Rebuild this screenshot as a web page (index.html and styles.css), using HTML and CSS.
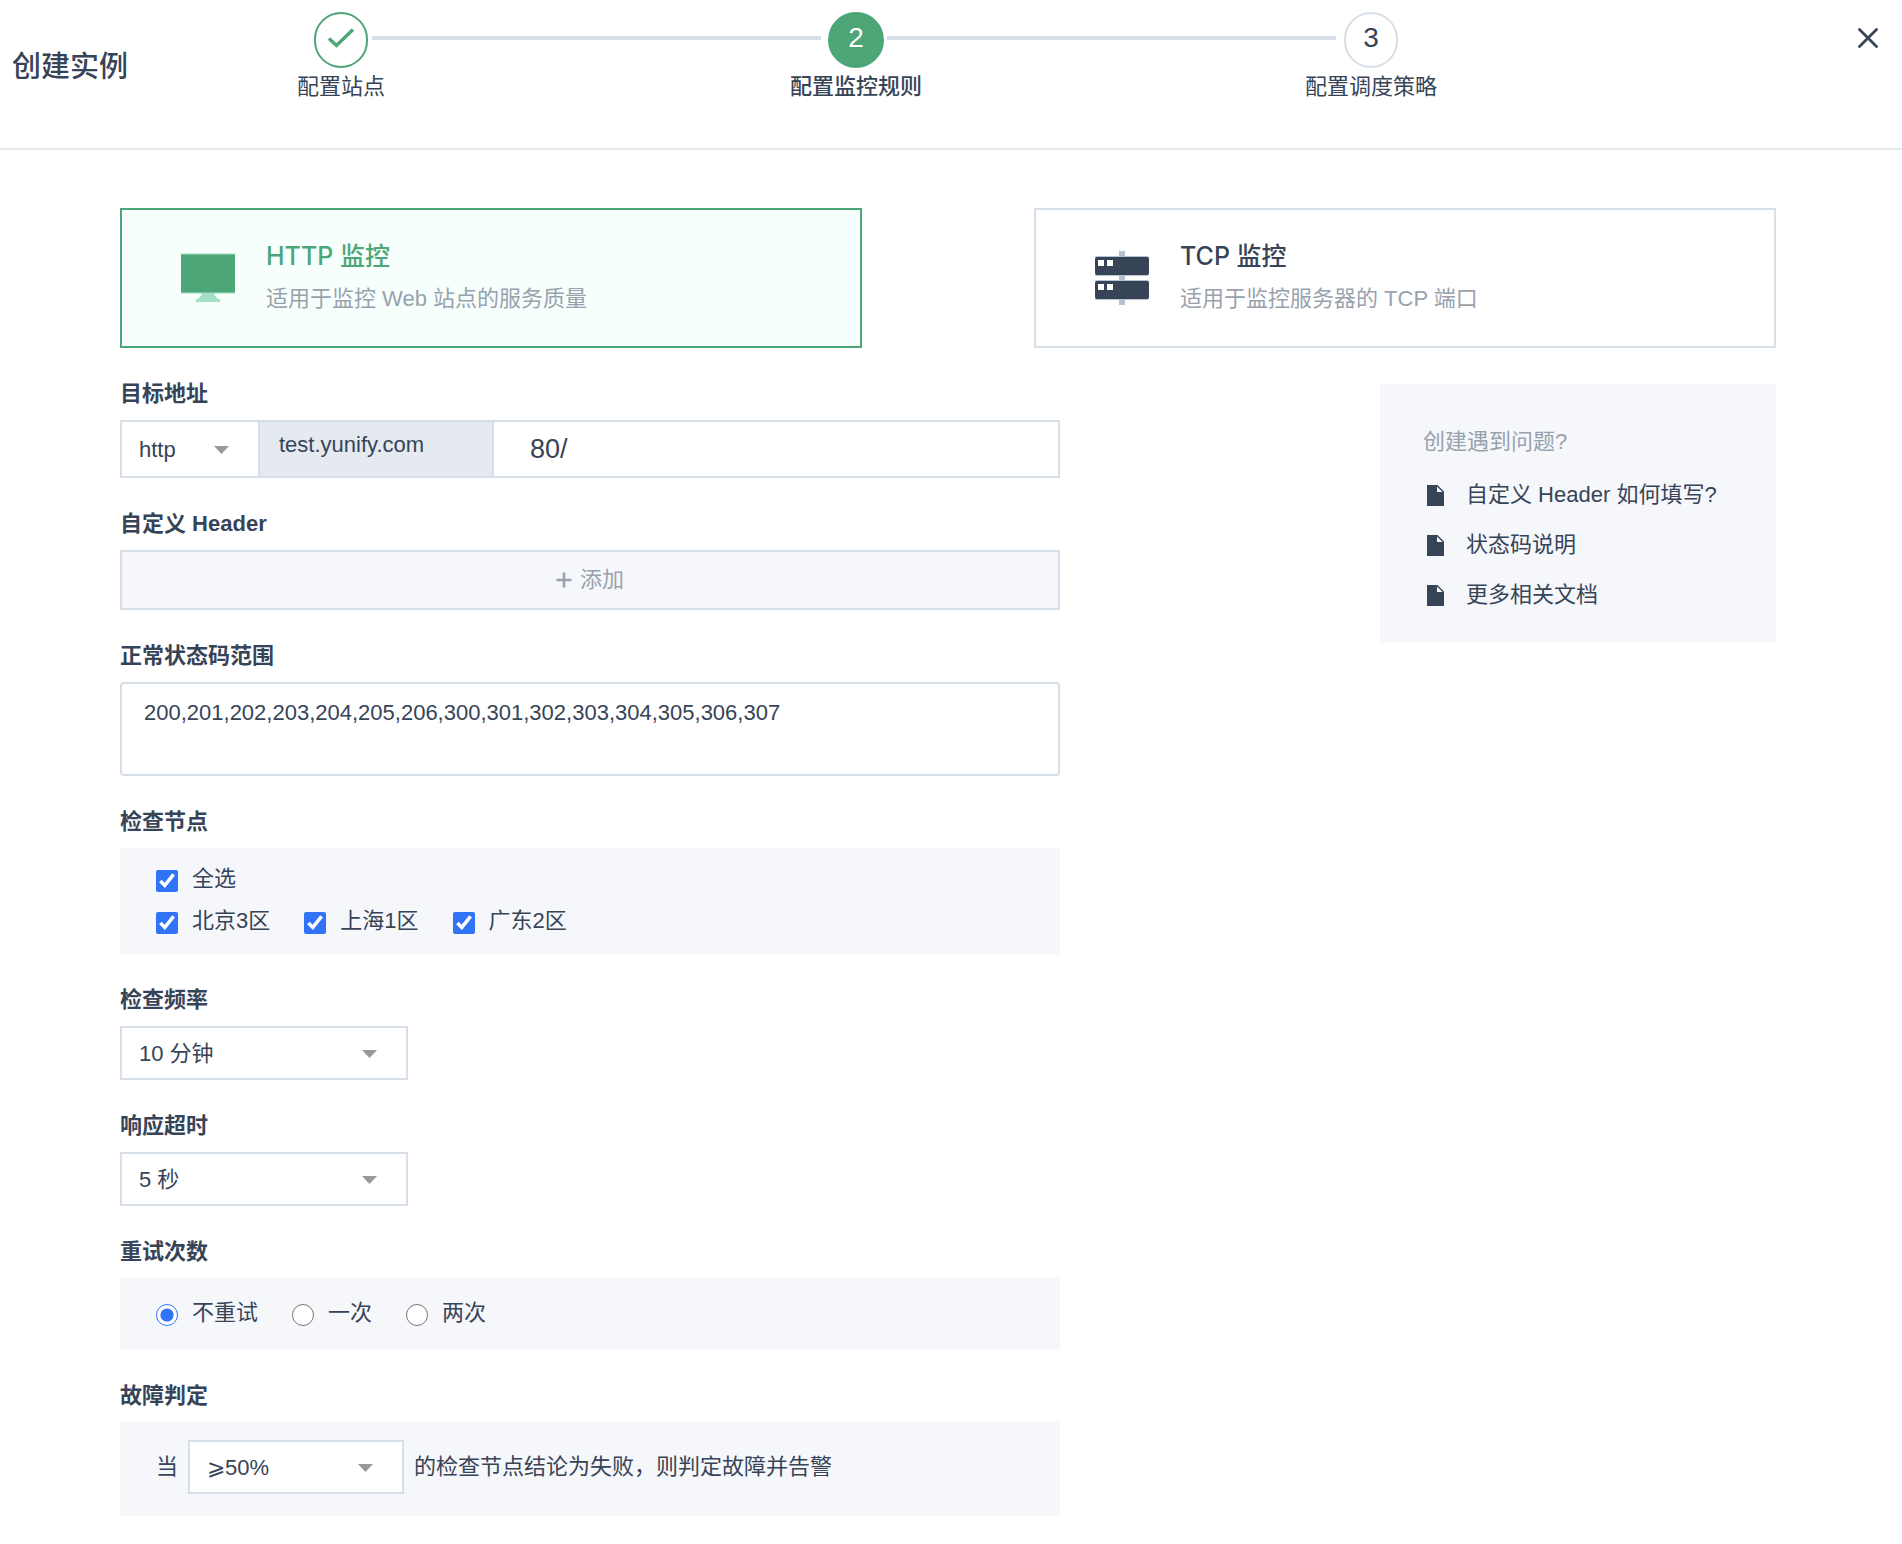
FILE: index.html
```html
<!DOCTYPE html>
<html lang="zh-CN">
<head>
<meta charset="utf-8">
<meta name="viewport" content="width=device-width, initial-scale=1">
<title>创建实例</title>
<link rel="stylesheet" href="styles.css">
</head>
<body>
<header class="header">
  <h1 class="header-title">创建实例</h1>
  <ol class="steps">
    <li class="step step-done">
      <span class="step-mark">
        <svg class="step-check" viewBox="0 0 28 22" aria-hidden="true"><path d="M2 11.500 9.500 18.500 26 2.500" fill="none" stroke="currentColor" stroke-width="3.400"/></svg>
      </span>
      <span class="step-label">配置站点</span>
    </li>
    <li class="step-line" aria-hidden="true"></li>
    <li class="step step-current" aria-current="step">
      <span class="step-mark">2</span>
      <span class="step-label">配置监控规则</span>
    </li>
    <li class="step-line" aria-hidden="true"></li>
    <li class="step">
      <span class="step-mark">3</span>
      <span class="step-label">配置调度策略</span>
    </li>
  </ol>
  <button class="close" type="button" aria-label="关闭">
    <svg viewBox="0 0 20 20" aria-hidden="true"><path d="M1.500 1.500 18.500 18.500M18.500 1.500 1.500 18.500" fill="none" stroke="currentColor" stroke-width="2.800" stroke-linecap="round"/></svg>
  </button>
</header>

<main class="main">
  <div class="types">
    <button class="type type-active" type="button" aria-pressed="true">
      <svg class="type-icon" viewBox="0 0 54 54" aria-hidden="true">
        <path d="M21 42h12q1 5 6 6.500V51H15v-2.500q5-1.500 6-6.500z" fill="#a2dfc5"/>
        <path d="M0 2.500h54v40H0z" fill="#a2dfc5"/>
        <path d="M0 3.500h54v38H0z" fill="#4ca677"/>
      </svg>
      <span class="type-text">
        <span class="type-name">HTTP 监控</span>
        <span class="type-desc">适用于监控 Web 站点的服务质量</span>
      </span>
    </button>
    <button class="type" type="button" aria-pressed="false">
      <svg class="type-icon" viewBox="0 0 54 54" aria-hidden="true">
        <path d="M24 0h6v54h-6z" fill="#b6c2cd"/>
        <rect y="5" width="54" height="20" rx="2" fill="#b6c2cd"/>
        <rect y="29" width="54" height="20" rx="2" fill="#b6c2cd"/>
        <rect y="6" width="54" height="18" rx="2" fill="#374457"/>
        <rect y="30" width="54" height="18" rx="2" fill="#374457"/>
        <path d="M3 9h6v6H3zM12 9h6v6h-6zM3 33h6v6H3zM12 33h6v6h-6z" fill="#fff"/>
      </svg>
      <span class="type-text">
        <span class="type-name">TCP 监控</span>
        <span class="type-desc">适用于监控服务器的 TCP 端口</span>
      </span>
    </button>
  </div>

  <div class="content">
    <form class="form">
      <div class="field">
        <label class="label" for="path">目标地址</label>
        <div class="address">
          <span class="select select-protocol">
            <select aria-label="协议"><option>http</option><option>https</option></select>
          </span>
          <span class="address-host">test.yunify.com</span>
          <input class="address-path" id="path" type="text" value="80/">
        </div>
      </div>

      <div class="field">
        <span class="label">自定义 Header</span>
        <button class="add" type="button">
          <svg class="add-icon" viewBox="0 0 16 16" aria-hidden="true"><path d="M8 1.500v13M1.500 8h13" fill="none" stroke="currentColor" stroke-width="2.600" stroke-linecap="round"/></svg>
          添加
        </button>
      </div>

      <div class="field">
        <label class="label" for="codes">正常状态码范围</label>
        <textarea class="codes" id="codes">200,201,202,203,204,205,206,300,301,302,303,304,305,306,307</textarea>
      </div>

      <fieldset class="field">
        <legend class="label">检查节点</legend>
        <div class="panel panel-nodes">
          <div class="choices">
            <label class="choice"><input type="checkbox" checked>全选</label>
          </div>
          <div class="choices">
            <label class="choice"><input type="checkbox" checked>北京3区</label>
            <label class="choice"><input type="checkbox" checked>上海1区</label>
            <label class="choice"><input type="checkbox" checked>广东2区</label>
          </div>
        </div>
      </fieldset>

      <div class="field">
        <label class="label" for="interval">检查频率</label>
        <span class="select select-medium">
          <select id="interval"><option>10 分钟</option></select>
        </span>
      </div>

      <div class="field">
        <label class="label" for="timeout">响应超时</label>
        <span class="select select-medium">
          <select id="timeout"><option>5 秒</option></select>
        </span>
      </div>

      <fieldset class="field">
        <legend class="label">重试次数</legend>
        <div class="panel panel-retry">
          <div class="choices">
            <label class="choice"><input type="radio" name="retry" checked>不重试</label>
            <label class="choice"><input type="radio" name="retry">一次</label>
            <label class="choice"><input type="radio" name="retry">两次</label>
          </div>
        </div>
      </fieldset>

      <div class="field">
        <label class="label" for="threshold">故障判定</label>
        <div class="panel panel-rule">
          <span>当</span>
          <span class="select select-small">
            <select id="threshold"><option>⩾50%</option></select>
          </span>
          <span>的检查节点结论为失败，则判定故障并告警</span>
        </div>
      </div>
    </form>

    <aside class="help">
      <h2 class="help-title">创建遇到问题?</h2>
      <ul class="help-list">
        <li><a class="help-link" href="#header"><svg class="help-icon" viewBox="0 0 17 21" aria-hidden="true"><path d="M0 0h10.500L17 6.500V21H0z" fill="currentColor"/><path d="M10 1.500 15.500 7H10z" fill="#f5f7fb"/></svg>自定义 Header 如何填写?</a></li>
        <li><a class="help-link" href="#codes"><svg class="help-icon" viewBox="0 0 17 21" aria-hidden="true"><path d="M0 0h10.500L17 6.500V21H0z" fill="currentColor"/><path d="M10 1.500 15.500 7H10z" fill="#f5f7fb"/></svg>状态码说明</a></li>
        <li><a class="help-link" href="#docs"><svg class="help-icon" viewBox="0 0 17 21" aria-hidden="true"><path d="M0 0h10.500L17 6.500V21H0z" fill="currentColor"/><path d="M10 1.500 15.500 7H10z" fill="#f5f7fb"/></svg>更多相关文档</a></li>
      </ul>
    </aside>
  </div>
</main>
</body>
</html>
```
FILE: styles.css
```css
:root {
  --text: #374457;
  --muted: #98a2ad;
  --border: #d6dee7;
  --surface: #f5f7fb;
  --green: #4ca677;
}

* {
  box-sizing: border-box;
}

body {
  margin: 0;
  background: #fff;
  color: var(--text);
  font: 22px/24px "Liberation Sans", "Noto Sans CJK SC", sans-serif;
}

button,
input,
select,
textarea {
  margin: 0;
  color: inherit;
  font: inherit;
}

button {
  cursor: pointer;
}

/* Header and stepper */

.header {
  display: grid;
  grid-template-columns: 313fr 1086fr 503fr;
  align-items: start;
  min-height: 150px;
  border-bottom: 2px solid #e4e9f0;
}

.header-title {
  margin: 0;
  padding: 47px 0 0 12px;
  font-size: 29px;
  font-weight: 500;
  line-height: 40px;
}

.steps {
  display: flex;
  margin: 0;
  padding: 12px 0 0;
  list-style: none;
}

.step {
  display: flex;
  flex: none;
  flex-direction: column;
  align-items: center;
  gap: 7px;
  width: 56px;
}

.step-mark {
  display: flex;
  align-items: center;
  justify-content: center;
  width: 54px;
  height: 56px;
  padding-bottom: 4px;
  border: 2px solid var(--border);
  border-radius: 28px;
  font-size: 28px;
}

.step-label {
  white-space: nowrap;
}

.step-done .step-mark {
  border-color: var(--green);
  color: var(--green);
}

.step-current .step-mark {
  width: 56px;
  border-color: var(--green);
  background: var(--green);
  color: #fff;
}

.step-current .step-label {
  font-weight: 500;
}

.step-check {
  width: 28px;
  height: 22px;
}

.step-line {
  flex: 1;
  height: 4px;
  margin: 24px 7px 0 3px;
  background: var(--border);
}

.close {
  justify-self: end;
  margin: 18px 14px 0;
  padding: 10px;
  border: 0;
  background: none;
}

.close svg {
  display: block;
  width: 20px;
  height: 20px;
}

/* Monitor type cards */

.main {
  padding: 58px 126px 28px 120px;
}

.types {
  display: grid;
  grid-template-columns: 1fr 1fr;
  gap: 172px;
}

.type {
  display: flex;
  align-items: center;
  gap: 31px;
  min-height: 140px;
  padding: 0 59px;
  border: 2px solid var(--border);
  background: #fff;
  text-align: left;
}

.type-icon {
  flex: none;
  width: 54px;
  height: 54px;
}

.type-text {
  display: flex;
  flex-direction: column;
  gap: 12px;
  padding-bottom: 3px;
}

.type-name {
  font-family: Inter, "Noto Sans CJK SC", sans-serif;
  font-size: 25px;
  font-weight: 500;
  line-height: 32px;
}

.type-desc {
  color: var(--muted);
  line-height: 30px;
}

.type-active {
  border-color: var(--green);
  background: #f7fffd;
}

.type-active .type-name {
  color: var(--green);
}

/* Form */

.content {
  display: flex;
  align-items: flex-start;
  justify-content: space-between;
  gap: 40px;
}

.form {
  flex: 0 1 940px;
  min-width: 0;
}

.field {
  min-width: 0;
  margin: 0;
  padding: 34px 0 0;
  border: 0;
}

.label {
  display: block;
  margin-bottom: 14px;
  padding: 0;
  font-weight: 600;
}

fieldset.field {
  padding: 0;
}

fieldset .label {
  padding-top: 34px;
}

.select {
  position: relative;
  display: block;
  border: 2px solid var(--border);
  background: #fff;
}

.select::after {
  position: absolute;
  top: 50%;
  right: 29px;
  width: 15px;
  height: 8px;
  margin-top: -3px;
  background: #999;
  clip-path: polygon(0 0, 100% 0, 50% 100%);
  content: "";
  pointer-events: none;
}

.select select {
  display: block;
  width: 100%;
  height: 50px;
  padding: 2px 17px 0;
  border: 0;
  background: none;
  appearance: none;
}

.select-medium {
  width: 288px;
}

.select-small {
  width: 216px;
}

.address {
  display: flex;
  border: 2px solid var(--border);
}

.select-protocol {
  width: 138px;
  border-width: 0 2px 0 0;
}

.select-protocol select {
  height: 54px;
}

.address-host {
  width: 234px;
  padding: 11px 19px;
  border-right: 2px solid var(--border);
  background: #e5eaf0;
}

.address-path {
  flex: 1;
  min-width: 0;
  padding: 0 36px;
  border: 0;
  background: #fff;
  font-size: 27px;
}

.add {
  display: flex;
  align-items: center;
  justify-content: center;
  gap: 8px;
  width: 100%;
  height: 60px;
  border: 2px solid var(--border);
  background: var(--surface);
  color: var(--muted);
}

.add-icon {
  width: 16px;
  height: 16px;
}

.codes {
  display: block;
  width: 100%;
  height: 94px;
  padding: 14px 22px;
  border: 2px solid var(--border);
  border-radius: 4px;
  background: #fff;
  line-height: 30px;
  resize: none;
}

.panel {
  padding: 0 36px;
  background: var(--surface);
}

.panel-nodes {
  padding-top: 10px;
  padding-bottom: 12px;
}

.panel-retry {
  padding-top: 14px;
  padding-bottom: 16px;
}

.panel-rule {
  display: flex;
  align-items: center;
  gap: 10px;
  padding-top: 18px;
  padding-bottom: 22px;
}

.choices {
  display: flex;
  flex-wrap: wrap;
  gap: 0 34px;
}

.choice {
  display: flex;
  align-items: center;
  gap: 14px;
  height: 42px;
}

.choice input {
  width: 22px;
  height: 22px;
  margin-top: 4px;
  accent-color: #3173f6;
}

/* Help panel */

.help {
  flex: none;
  width: 396px;
  margin-top: 36px;
  padding: 30px 43px 22px;
  background: var(--surface);
}

.help-title {
  margin: 0;
  color: var(--muted);
  font-size: 22px;
  font-weight: 400;
  line-height: 56px;
}

.help-list {
  margin: 0;
  padding: 0;
  list-style: none;
}

.help-link {
  display: flex;
  align-items: center;
  gap: 22px;
  height: 50px;
  padding-left: 4px;
  color: inherit;
  text-decoration: none;
  white-space: nowrap;
}

.help-icon {
  flex: none;
  width: 17px;
  height: 21px;
}
```
